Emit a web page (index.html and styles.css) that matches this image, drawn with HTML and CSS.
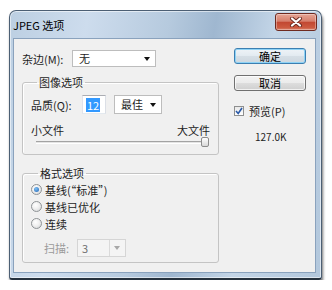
FILE: index.html
```html
<!DOCTYPE html>
<html lang="zh-CN">
<head>
<meta charset="utf-8">
<title>JPEG 选项</title>
<link rel="stylesheet" href="styles.css">
</head>
<body>
<div class="window">
  <div class="titlebar">
    <span class="title">JPEG 选项</span>
    <button class="close" aria-label="关闭">
      <svg width="14" height="10" viewBox="0 0 14 10">
        <path d="M3 1.5 L11 8.5 M11 1.5 L3 8.5" stroke="#6b2b22" stroke-width="4" stroke-linecap="round"/>
        <path d="M3 1.5 L11 8.5 M11 1.5 L3 8.5" stroke="#ffffff" stroke-width="2.2" stroke-linecap="round"/>
      </svg>
    </button>
  </div>
  <div class="client">
    <div class="left">
      <div class="row matte">
        <span class="lbl lbl-matte">杂边(M):</span>
        <div class="select select-matte"><span>无</span><i class="arrow"></i></div>
      </div>
      <fieldset class="group group-image">
        <legend>图像选项</legend>
        <div class="row quality">
          <span class="lbl lbl-quality">品质(Q):</span>
          <div class="textbox"><span class="sel">12</span></div>
          <div class="select select-quality"><span>最佳</span><i class="arrow"></i></div>
        </div>
        <div class="sizes">
          <span>小文件</span>
          <span>大文件</span>
        </div>
        <div class="slider">
          <div class="track"></div>
          <div class="thumb"></div>
        </div>
      </fieldset>
      <fieldset class="group group-format">
        <legend>格式选项</legend>
        <div class="radio-row"><span class="radio on"></span><span>基线(“标准”)</span></div>
        <div class="radio-row"><span class="radio"></span><span>基线已优化</span></div>
        <div class="radio-row"><span class="radio"></span><span>连续</span></div>
        <div class="row scan">
          <span class="lbl lbl-scan">扫描:</span>
          <div class="select select-scan"><span>3</span><b class="sep"></b><i class="arrow"></i></div>
        </div>
      </fieldset>
    </div>
    <div class="right">
      <button class="btn btn-default">确定</button>
      <button class="btn btn-cancel">取消</button>
      <div class="check-row">
        <span class="checkbox">
          <svg width="8" height="8" viewBox="0 0 8 8"><path d="M1 4 L3.2 6.5 L7 1" fill="none" stroke="#2a5aa8" stroke-width="1.6"/></svg>
        </span>
        <span>预览(P)</span>
      </div>
      <div class="filesize">127.0K</div>
    </div>
  </div>
</div>
</body>
</html>
```
FILE: styles.css
```css
* { box-sizing: border-box; }
body {
  margin: 0;
  background: #ffffff;
  font-family: "Noto Sans CJK SC", "Noto Sans", sans-serif;
  font-size: 11px;
  color: #1e1e1e;
}
.window {
  margin: 10px 0 0 9px;
  width: 313px;
  height: 270px;
  border: 1px solid #4c5f74;
  border-bottom: 2px solid #26323e;
  border-radius: 7px 7px 3px 3px;
  background: linear-gradient(100deg, #bccfe2 0%, #cddced 22%, #b6cade 45%, #9fb7d0 58%, #c3d5e7 75%, #b2c7dc 100%);
  box-shadow: inset 0 0 0 1px rgba(255,255,255,0.55), 1px 3px 3px rgba(0,0,0,0.55);
  display: flex;
  flex-direction: column;
  padding: 0 5px 5px 3px;
}
.titlebar {
  height: 27px;
  display: flex;
  align-items: flex-start;
}
.title {
  margin-top: 6px;
  line-height: 16px;
  font-size: 11px;
  color: #000;
}
.close {
  margin: 2px -1px 0 auto;
  width: 42px;
  height: 18px;
  border: 1px solid #6e2a20;
  border-radius: 3px;
  background: linear-gradient(#e6a595 0%, #d67f6c 45%, #c24832 52%, #cc5a40 85%, #d98670 100%);
  box-shadow: inset 0 0 0 1px rgba(255,255,255,0.35);
  padding: 0;
  display: flex;
  align-items: center;
  justify-content: center;
}
.client {
  height: 235px;
  border: 1px solid #8aa2bd;
  background: #f0f0f0;
  display: flex;
  gap: 15px;
  padding: 11px 0 0 8px;
}
.left {
  width: 197px;
  display: flex;
  flex-direction: column;
}
.row {
  display: flex;
  align-items: center;
}
.lbl { line-height: 16px; white-space: nowrap; }
.matte { height: 17px; }
.lbl-matte { width: 50px; }
.select {
  position: relative;
  display: flex;
  align-items: center;
  background: #fff;
  border: 1px solid #bdbdbd;
  padding-left: 6px;
  line-height: 15px;
}
.select .arrow {
  position: absolute;
  right: 5px;
  top: 50%;
  margin-top: -2px;
  width: 0;
  height: 0;
  border-left: 3.5px solid transparent;
  border-right: 3.5px solid transparent;
  border-top: 4px solid #111;
}
.select-matte { width: 84px; height: 17px; }
.group {
  margin: 7px 0 0 0;
  width: 197px;
  min-width: 0;
  border: 1px solid #c4c4c4;
  border-radius: 3px;
  box-shadow: inset 1px 1px 0 #fff;
  padding: 0 8px 7px 8px;
}
.group legend {
  margin-left: 6px;
  padding: 0 2px;
  line-height: 16px;
}
.group-format legend { margin-left: 7px; }
.quality { margin-top: 5px; height: 19px; }
.lbl-quality { width: 51px; }
.textbox {
  width: 24px;
  height: 19px;
  background: #fff;
  border: 1px solid #abadb3;
  border-color: #abadb3 #dbdfe6 #e3e9ef #e2e3ea;
  padding: 1px 0 0 3px;
  display: flex;
  align-items: center;
}
.textbox .sel {
  background: #3399ff;
  color: #fff;
  line-height: 14px;
  padding: 0 1px;
}
.select-quality { width: 48px; height: 19px; margin-left: 8px; }
.sizes {
  margin-top: 8px;
  display: flex;
  justify-content: space-between;
  line-height: 16px;
}
.slider {
  margin-top: -1px;
  height: 10px;
  display: flex;
  align-items: center;
  padding: 0 1px 0 5px;
}
.track {
  flex: 1;
  height: 3px;
  margin-right: -2px;
  background: #e4e4e4;
  border-top: 1px solid #a3a3a3;
  border-bottom: 1px solid #fff;
}
.thumb {
  position: relative;
  width: 8px;
  height: 10px;
  border: 1px solid #8c8c8c;
  border-radius: 2px;
  background: linear-gradient(#ffffff, #d8d8d8);
}
.group-format { margin-top: 10px; padding-bottom: 5px; }
.radio-row {
  height: 17px;
  display: flex;
  align-items: center;
  gap: 3px;
}
.radio {
  position: relative;
  width: 11px;
  height: 11px;
  border-radius: 50%;
  border: 1px solid #8f9396;
  background: radial-gradient(circle at 40% 35%, #ffffff 0%, #f0f0f0 45%, #cfd2d4 100%);
}
.radio.on::after {
  content: "";
  position: absolute;
  left: 2px;
  top: 2px;
  width: 5px;
  height: 5px;
  border-radius: 50%;
  background: radial-gradient(circle at 40% 35%, #7fc1f5, #1f62b3);
}
.scan { margin-top: 7px; height: 18px; padding-left: 13px; }
.lbl-scan { width: 33px; color: #9a9a9a; }
.select-scan {
  width: 49px;
  height: 18px;
  border-color: #d5d5d5;
  background: #f4f4f4;
  color: #707070;
  padding-left: 4px;
}
.select-scan .sep {
  position: absolute;
  left: 31px;
  top: 0;
  bottom: 0;
  width: 1px;
  background: #dadada;
}
.select-scan .arrow { border-top-color: #a8a8a8; right: 5px; }
.right {
  width: 72px;
  margin-top: -2px;
  display: flex;
  flex-direction: column;
}
.btn {
  width: 72px;
  height: 16px;
  padding: 0;
  font: inherit;
  line-height: 14px;
  color: #000;
  border: 1px solid #707070;
  border-radius: 3px;
  background: linear-gradient(#f3f3f3 0%, #ebebeb 48%, #dddddd 52%, #cfcfcf 100%);
  box-shadow: inset 0 0 0 1px rgba(255,255,255,0.7);
}
.btn-default {
  border-color: #3c7fb1;
  background: linear-gradient(#eef3f7 0%, #e3ebf1 48%, #d6dfe6 52%, #cdd7df 100%);
  box-shadow: inset 0 0 0 1px #8fd3f6;
}
.btn-cancel { margin-top: 11px; }
.check-row {
  margin-top: 13px;
  height: 13px;
  display: flex;
  align-items: center;
  gap: 5px;
  line-height: 16px;
}
.checkbox {
  width: 10px;
  height: 10px;
  border: 1px solid #8e8f8f;
  background: linear-gradient(#e8e8e8, #fff);
  display: flex;
  align-items: center;
  justify-content: center;
}
.filesize {
  margin-top: 12px;
  padding-left: 21px;
  line-height: 16px;
  font-size: 10px;
}
```
